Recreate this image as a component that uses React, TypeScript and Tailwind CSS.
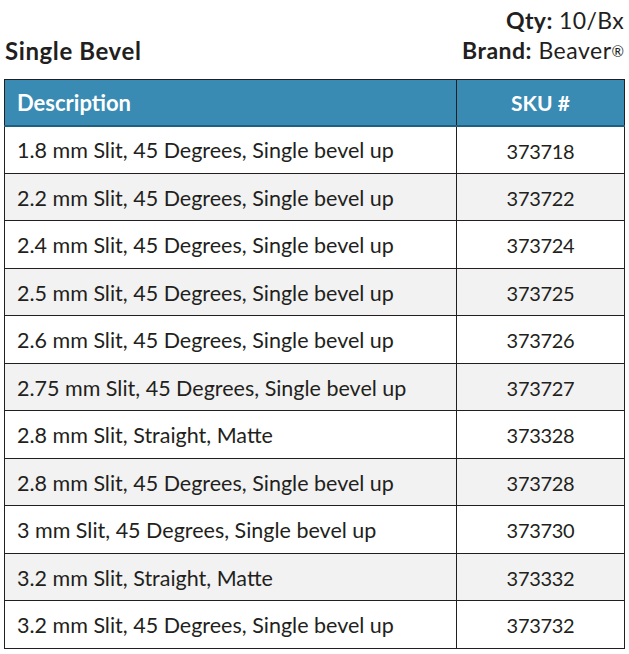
import React from 'react';

const rows: { desc: string; sku: string }[] = [
    { desc: '1.8 mm Slit, 45 Degrees, Single bevel up', sku: '373718' },
    { desc: '2.2 mm Slit, 45 Degrees, Single bevel up', sku: '373722' },
    { desc: '2.4 mm Slit, 45 Degrees, Single bevel up', sku: '373724' },
    { desc: '2.5 mm Slit, 45 Degrees, Single bevel up', sku: '373725' },
    { desc: '2.6 mm Slit, 45 Degrees, Single bevel up', sku: '373726' },
    { desc: '2.75 mm Slit, 45 Degrees, Single bevel up', sku: '373727' },
    { desc: '2.8 mm Slit, Straight, Matte', sku: '373328' },
    { desc: '2.8 mm Slit, 45 Degrees, Single bevel up', sku: '373728' },
    { desc: '3 mm Slit, 45 Degrees, Single bevel up', sku: '373730' },
    { desc: '3.2 mm Slit, Straight, Matte', sku: '373332' },
    { desc: '3.2 mm Slit, 45 Degrees, Single bevel up', sku: '373732' },
];

export default function App() {
    return (
        <div className="w-[629px] h-[654px] bg-white text-[#231f20] font-['Lato','Liberation_Sans',sans-serif]">
            {/* Heading */}
            <div className="flex items-end justify-between pl-[5px] pr-[5px] h-[79px] pb-[14px]">
                <h1 className="text-[24px] font-bold leading-none tracking-[0.6px] mb-[2px]">Single Bevel</h1>
                <div className="flex flex-col items-end text-[23px] leading-[30px]">
                    <div className="tracking-[0.4px]">
                        <span className="font-bold">Qty:</span> 10/Bx
                    </div>
                    <div className="tracking-[0.5px]">
                        <span className="font-bold">Brand:</span> Beaver
                        <span className="text-[15px] align-top relative top-[1px] tracking-normal">®</span>
                    </div>
                </div>
            </div>

            {/* Table */}
            <table className="ml-[4px] w-[621px] border-collapse border-[1.5px] border-[#231f20] text-[21.5px]">
                <thead>
                    <tr className="bg-[#398bb3] text-white h-[46px] border-b-2 border-b-[#1f5f80]">
                        <th className="text-left font-bold text-[22px] pl-[12px] border-r-[1.5px] border-[#231f20] w-[452px]">Description</th>
                        <th className="text-center font-bold text-[21px]">SKU #</th>
                    </tr>
                </thead>
                <tbody>
                    {rows.map((r, i) => (
                        <tr key={r.sku + i} className={`h-[47.5px] border-t-[1.5px] border-[#231f20] ${i % 2 === 1 ? 'bg-[#f2f2f2]' : 'bg-white'}`}>
                            <td className="pl-[12px] pt-[2px] border-r-[1.5px] border-[#231f20]">{r.desc}</td>
                            <td className="text-center pt-[2px] text-[20px] tracking-[-0.3px]">{r.sku}</td>
                        </tr>
                    ))}
                </tbody>
            </table>
        </div>
    );
}
